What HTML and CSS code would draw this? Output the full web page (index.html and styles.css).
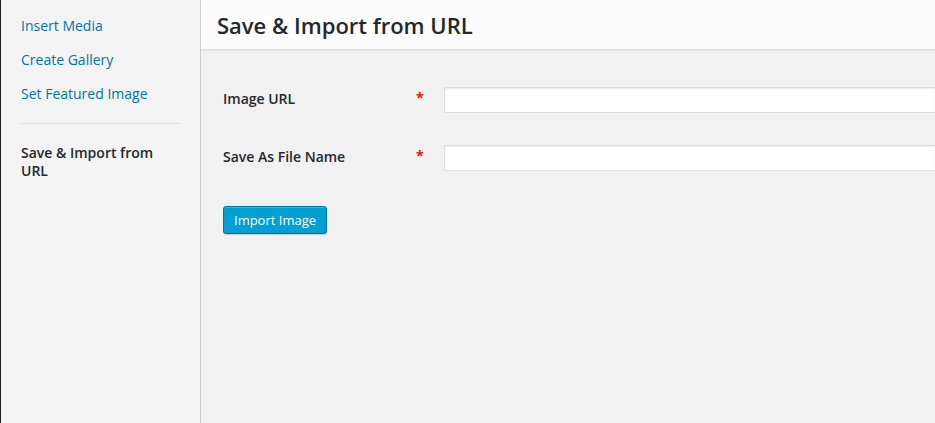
FILE: index.html
```html
<!DOCTYPE html>
<html>
<head>
<meta charset="utf-8">
<link rel="stylesheet" href="styles.css">
</head>
<body>
<div class="frame">
  <nav class="menu">
    <a class="menu-item" href="#">Insert Media</a>
    <a class="menu-item" href="#">Create Gallery</a>
    <a class="menu-item" href="#">Set Featured Image</a>
    <div class="separator"></div>
    <span class="menu-item active">Save &amp; Import from URL</span>
  </nav>
  <main class="main">
    <header class="title-bar"><h1 class="title">Save &amp; Import from URL</h1></header>
    <div class="content">
      <div class="row">
        <label class="label">Image URL</label>
        <span class="req">*</span>
        <input class="field" type="text">
      </div>
      <div class="row">
        <label class="label">Save As File Name</label>
        <span class="req">*</span>
        <input class="field" type="text">
      </div>
      <button class="button">Import Image</button>
    </div>
  </main>
</div>
</body>
</html>
```
FILE: styles.css
```css
html, body {
  margin: 0;
  height: 100%;
  overflow: hidden;
}
body {
  font-family: "Open Sans", "Noto Sans", sans-serif;
  font-size: 14px;
  color: #23282d;
  background: #f1f1f1;
}
.frame {
  display: flex;
  height: 100%;
}
.menu {
  flex: 0 0 199px;
  background: #f3f3f3;
  border-left: 1px solid #1d1d1d;
  border-right: 1px solid #cccccc;
  padding-top: 9px;
  display: flex;
  flex-direction: column;
}
.menu-item {
  display: block;
  padding: 8px 20px;
  line-height: 18px;
  color: #0073aa;
  text-decoration: none;
}
.menu-item.active {
  color: #23282d;
  font-weight: 600;
}
.separator {
  margin: 12px 20px;
  border-top: 1px solid #dddddd;
}
.main {
  flex: 1;
  min-width: 0;
  display: flex;
  flex-direction: column;
  overflow: hidden;
}
.title-bar {
  height: 49px;
  background: #fcfcfc;
  border-bottom: 1px solid #dddddd;
  box-shadow: 0 1px 1px rgba(0,0,0,0.03);
}
.title {
  margin: 0;
  padding: 0 16px;
  font-size: 22px;
  font-weight: 600;
  line-height: 50px;
  color: #23282d;
}
.content {
  padding: 37px 0 0 22px;
}
.row {
  display: flex;
  align-items: center;
  height: 26px;
  margin-bottom: 32px;
}
.label {
  flex: 0 0 193px;
  font-weight: 600;
  margin-bottom: 3px;
}
.req {
  flex: 0 0 28px;
  color: #ee1111;
  font-weight: 700;
  margin-top: -6px;
}
.field {
  flex: 1;
  min-width: 0;
  height: 26px;
  box-sizing: border-box;
  border: 1px solid #dddddd;
  border-right-width: 0;
  background: #fff;
  box-shadow: inset 0 1px 2px rgba(0,0,0,0.07);
  margin: 0;
  padding: 2px 6px;
}
.button {
  margin-top: 3px;
  height: 28px;
  padding: 0 10px 1px;
  font-family: "Open Sans", "Noto Sans", sans-serif;
  font-size: 13px;
  line-height: 26px;
  color: #fff;
  background: #00a0d2;
  border: 1px solid #0073aa;
  border-radius: 3px;
  box-shadow: inset 0 1px 0 rgba(120,200,230,0.5), 0 1px 0 rgba(0,0,0,0.15);
  cursor: pointer;
}
```
